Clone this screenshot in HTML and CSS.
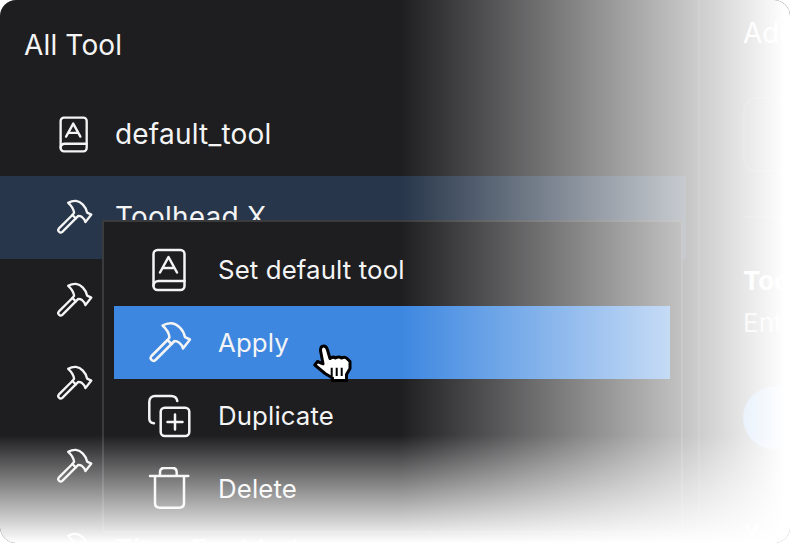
FILE: index.html
```html
<!DOCTYPE html>
<html lang="en">
<head>
<meta charset="utf-8">
<title>All Tool</title>
<link rel="stylesheet" href="styles.css">
</head>
<body>
<svg class="defs" width="0" height="0" aria-hidden="true">
  <defs>
    <g id="i-book"><rect x="5.5" y="2" width="31" height="40" rx="4"/><path d="M36.5 33H10.5a5 5 0 0 0-5 4.5"/><path d="M12 24.5L20.5 9l8.500 15.500M15 20h11"/></g>
    <g id="i-hammer"><path d="M14.500 4.500C17.500 2.800 21 2 23.700 2.200C29.500 3 35.500 8.500 37 16.200L42 18.500L35 27.500C34.500 25 33 23 31 21.500C29.500 20.500 28 20 26.500 20L23.500 23L19.500 19L21.500 16.500C21 12 18 7.500 14.500 4.500Z"/><path d="M19.500 19L3.500 35a2.830 2.830 0 0 0 4 4L23.500 23"/></g>
    <g id="i-dup"><path d="M6 29.300C3 29 1.300 27.500 1.300 24.500V8C1.300 4.500 3.500 2 7 2h16c3.500 0 5.800 1.800 6.300 5"/><rect x="12.700" y="13.700" width="28.600" height="28.300" rx="4"/><path d="M27 20.500v15M19.500 28h15"/></g>
    <g id="i-trash"><path d="M2 9h38.300M12 9V5.500C12 2.500 14 .9 16.500.9h7.800c2.700 0 4.400 1.600 4.400 4.600V9M7 9v27c0 3 1.800 4.700 4.700 4.700h19.600c3 0 4.700-1.700 4.700-4.700V9"/></g>
  </defs>
</svg>
<div class="window">
  <aside class="sidebar">
    <h1 class="title">All Tool</h1>
    <ul class="rows">
      <li class="row"><svg class="ico ico-s" viewBox="0 0 44 44"><use href="#i-book"/></svg><span>default_tool</span></li>
      <li class="row row-on"><svg class="ico ico-s" viewBox="0 0 44 44"><use href="#i-hammer"/></svg><span>Toolhead X</span></li>
      <li class="row"><svg class="ico ico-s" viewBox="0 0 44 44"><use href="#i-hammer"/></svg></li>
      <li class="row"><svg class="ico ico-s" viewBox="0 0 44 44"><use href="#i-hammer"/></svg></li>
      <li class="row"><svg class="ico ico-s" viewBox="0 0 44 44"><use href="#i-hammer"/></svg></li>
      <li class="row"><svg class="ico ico-s" viewBox="0 0 44 44"><use href="#i-hammer"/></svg><span>Titan Enabled</span></li>
    </ul>
  </aside>
  <section class="panel">
    <h2 class="panel-title">Add Tool</h2>
    <div class="panel-box"></div>
    <div class="panel-rule"></div>
    <h3 class="panel-label">Tool Name</h3>
    <p class="panel-hint">Enter a name</p>
    <div class="panel-btn"></div>
    <p class="panel-x">X</p>
  </section>
  <div class="menu">
    <div class="item"><svg class="ico ico-m" viewBox="0 0 44 44"><use href="#i-book"/></svg><span>Set default tool</span></div>
    <div class="item item-on"><svg class="ico ico-m" viewBox="0 0 44 44"><use href="#i-hammer"/></svg><span>Apply</span></div>
    <div class="item"><svg class="ico ico-m" viewBox="0 0 44 44"><use href="#i-dup"/></svg><span>Duplicate</span></div>
    <div class="item"><svg class="ico ico-m" viewBox="0 0 44 44"><use href="#i-trash"/></svg><span>Delete</span></div>
  </div>
  <div class="fade fade-right"></div>
  <div class="fade fade-bottom"></div>
</div>
<svg class="cursor" width="40" height="42" viewBox="0 0 40 42">
  <path class="cursor-hand" d="M7.500 6.500Q7.500 2 10.500 2T14.500 6L17 14.500Q20 12 22.500 14Q26 12 28.500 14Q32 12.500 34 14.500L37 17.500V24.500L33.500 30.500V36.500H19.500V34L12 29.500L1.800 21L4.500 17.500L10 19.800Z"/>
  <path class="cursor-lines" d="M18.700 23.700V32M23.700 23.700V32M28.700 23.700V32"/>
</svg>
</body>
</html>
```
FILE: styles.css
```css
* { box-sizing: border-box; }
html, body { margin: 0; padding: 0; background: #fff; }
body { width: 790px; height: 545px; overflow: hidden; position: relative; font-family: Inter, "Liberation Sans", sans-serif; color: #f4f4f5; }
.defs { position: absolute; }
.window { position: relative; width: 790px; height: 543px; background: #1e1e20; border-radius: 16px; overflow: hidden; display: flex; }
.sidebar { width: 700px; flex: none; border-right: 2px solid #323335; }
.title { margin: 0; height: 92.500px; padding: 28px 0 0 24px; font-size: 28px; line-height: 34px; font-weight: 400; letter-spacing: .15px; }
.rows { list-style: none; margin: 0; padding: 0; width: 686px; }
.row { height: 83.200px; display: flex; align-items: center; gap: 22px; padding-left: 56px; font-size: 28px; letter-spacing: .2px; white-space: nowrap; }
.row-on { background: #27364a; }
.ico { flex: none; fill: none; stroke: currentColor; stroke-linejoin: round; stroke-linecap: round; }
.ico-s { width: 37px; height: 37px; stroke-width: 2.800; }
.ico-m { width: 44px; height: 44px; stroke-width: 2.500; }
.menu { position: absolute; left: 102px; top: 220px; width: 581px; height: 313px; padding: 11px 11px 0 10px; background: #1e1e20; border: 2px solid #3a3b3d; }
.item { height: 73px; display: flex; align-items: center; gap: 27px; padding-left: 34px; font-size: 25.800px; letter-spacing: .12px; }
.item span { margin-left: -1px; }
.item-on { background: #3d87e0; }
.panel { flex: 1; padding: 0 0 0 43px; white-space: nowrap; }
.panel-title { margin: 16px 0 0; font-size: 28px; line-height: 34px; font-weight: 400; }
.panel-box { margin-top: 47px; width: 200px; height: 75px; border: 2px solid #3a3b3d; border-radius: 14px; }
.panel-rule { margin-top: 44px; height: 2px; width: 200px; background: #3a3b3d; }
.panel-label { margin: 46px 0 0; font-size: 26px; line-height: 34px; font-weight: 700; }
.panel-hint { margin: 8px 0 0; font-size: 26px; line-height: 34px; color: #c8c8ca; }
.panel-btn { margin-top: 47px; width: 200px; height: 62px; border-radius: 31px; background: #3d87e0; }
.panel-x { margin: 68px 0 0; font-size: 26px; line-height: 34px; }
.fade { position: absolute; pointer-events: none; }
.fade-right { top: 0; bottom: 0; left: 400px; right: 5px; background: linear-gradient(to right, rgba(255,255,255,0), #fff); }
.fade-right::after { content: ""; position: absolute; top: 0; bottom: 0; left: 100%; width: 5px; background: #fff; }
.fade-bottom { left: 0; right: 0; top: 435px; bottom: 0; background: linear-gradient(to bottom, rgba(255,255,255,0), #fff); }
.cursor { position: absolute; left: 313px; top: 344px; }
.cursor-hand { fill: #fff; stroke: #000; stroke-width: 3; stroke-linejoin: round; }
.cursor-lines { fill: none; stroke: #000; stroke-width: 2; }
```
